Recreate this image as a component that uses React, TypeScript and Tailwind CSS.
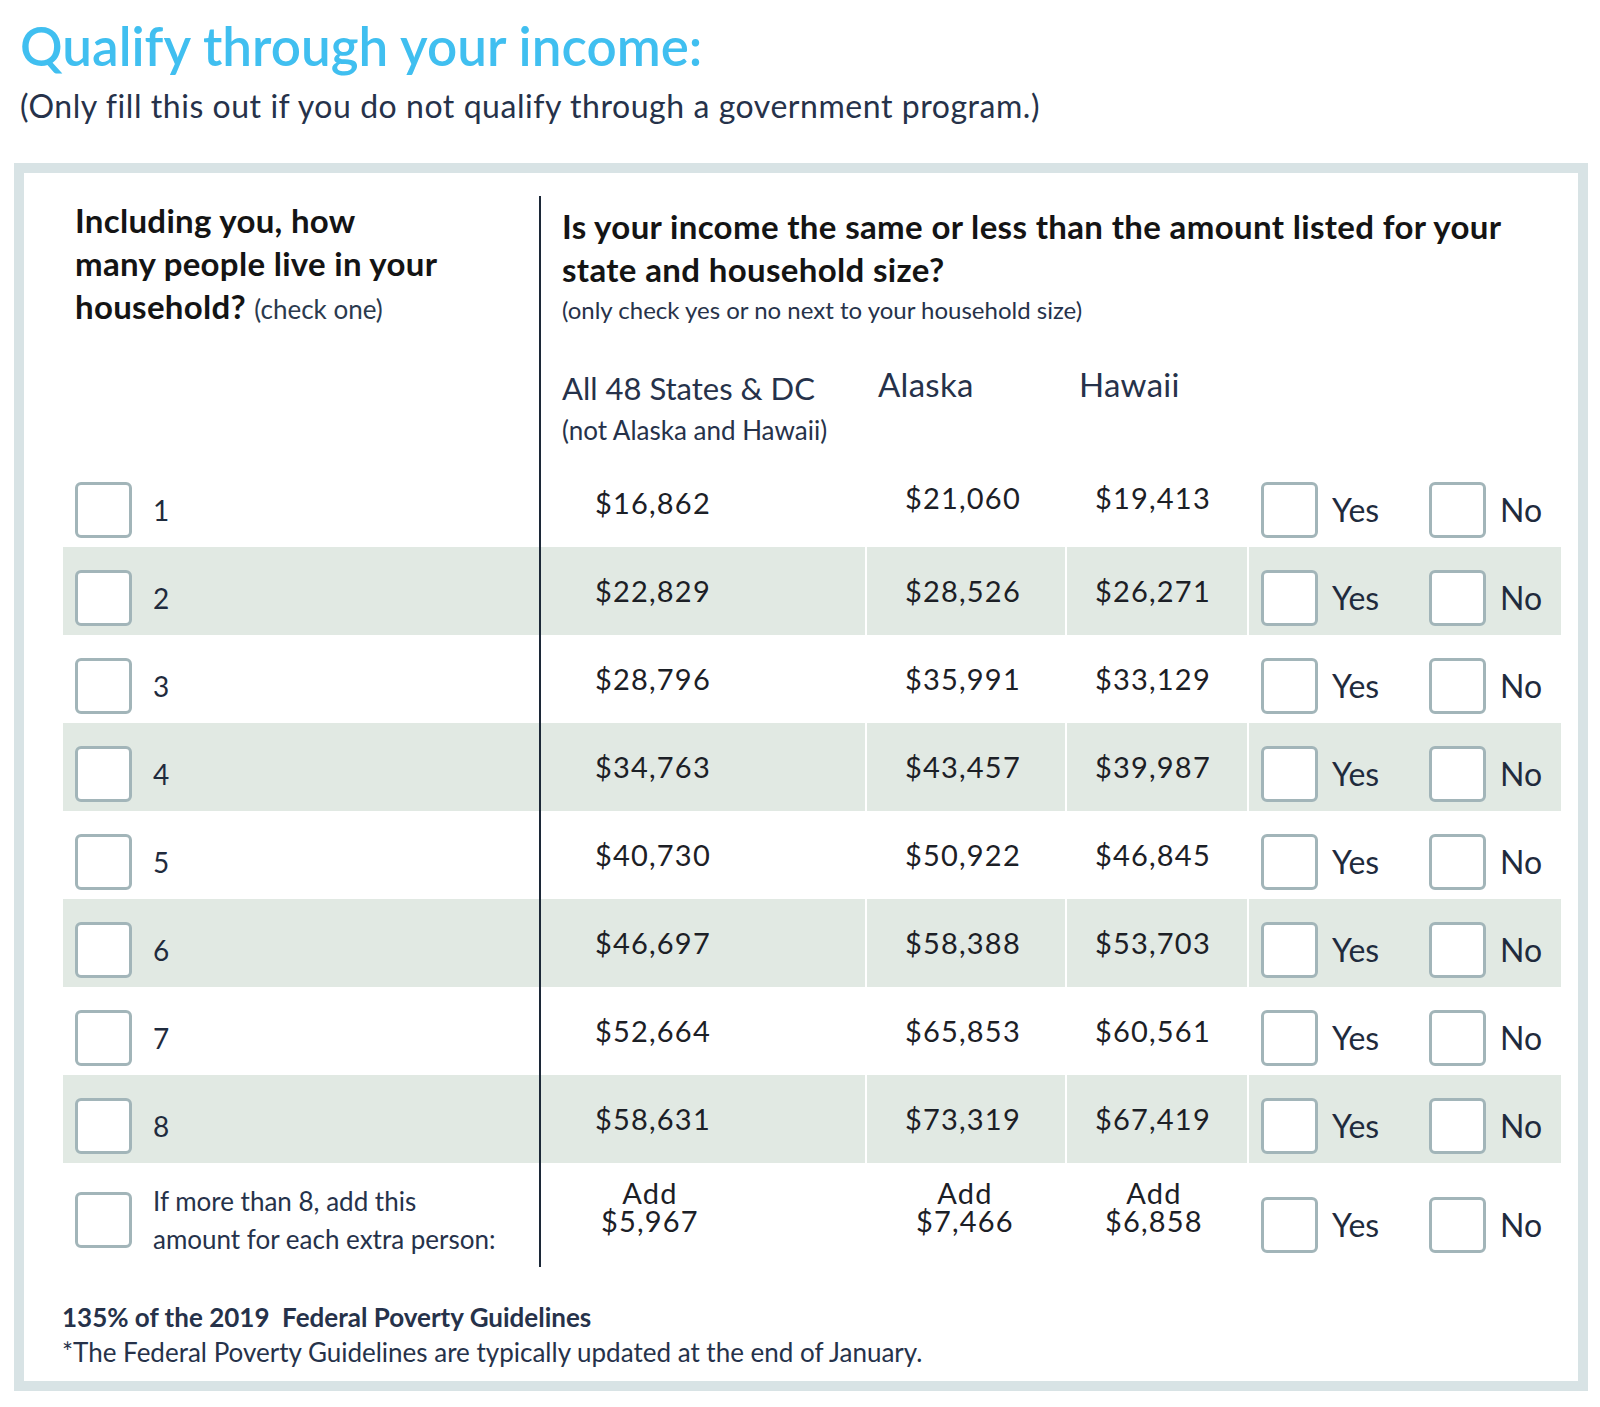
import React from "react"

const rows = [
  { n: "1", all: "$16,862", ak: "$21,060", hi: "$19,413" },
  { n: "2", all: "$22,829", ak: "$28,526", hi: "$26,271" },
  { n: "3", all: "$28,796", ak: "$35,991", hi: "$33,129" },
  { n: "4", all: "$34,763", ak: "$43,457", hi: "$39,987" },
  { n: "5", all: "$40,730", ak: "$50,922", hi: "$46,845" },
  { n: "6", all: "$46,697", ak: "$58,388", hi: "$53,703" },
  { n: "7", all: "$52,664", ak: "$65,853", hi: "$60,561" },
  { n: "8", all: "$58,631", ak: "$73,319", hi: "$67,419" },
]

const sans = "font-['Lato','Noto_Sans',sans-serif]"
const nums = "font-['Lato','Noto_Sans',sans-serif] font-normal text-[#1c2026] text-[29px] tracking-[1.2px]"

function Box() {
  return <div className="h-[56px] w-[57px] shrink-0 rounded-[6px] border-[3px] border-[#a2b5b9] bg-white" />
}

function YesNo() {
  return (
    <div className="flex items-center pl-[12px]">
      <div className="flex w-[168px] items-center gap-[14px]">
        <Box />
        <span className="text-[32px] text-[#1f2b3d]">Yes</span>
      </div>
      <div className="flex items-center gap-[14px]">
        <Box />
        <span className="text-[32px] text-[#1f2b3d]">No</span>
      </div>
    </div>
  )
}

function Add({ v }: { v: string }) {
  return (
    <div className={`${nums} inline-block text-center`}>
      <p className="leading-[28px]">Add</p>
      <p className="leading-[28px]">{v}</p>
    </div>
  )
}

export default function App() {
  return (
    <div className={`min-h-[1407px] w-[1600px] bg-white ${sans}`}>
      <div className="pl-[20px] pt-[14px]">
        <h1 className="text-[53px] leading-[64px] font-semibold text-[#40bff0]">
          Qualify through your income:
        </h1>
        <p className="mt-[8px] text-[32px] leading-[40px] tracking-[0.55px] text-[#26324a]">
          (Only fill this out if you do not qualify through a government program.)
        </p>
      </div>

      <div className="ml-[14px] mr-[12px] mt-[37px] border-[10px] border-[#d8e3e5] bg-white pb-[11px] pl-[39px] pr-[17px] pt-[23px]">
        {/* header */}
        <div className="flex h-[263px]">
          <div className="w-[476px] pl-[12px] pt-[3px]">
            <p className="text-[33px] leading-[43px] font-bold text-[#141414] tracking-[0.3px]">
              Including you, how
              <br />
              many people live in your
              <br />
              household?{" "}
              <span className="text-[26px] font-normal text-[#2b3a4e] tracking-[0px]">(check one)</span>
            </p>
          </div>
          <div className="flex-1 border-l-2 border-[#1c2838] pl-[21px] pt-[9px]">
            <p className="text-[33px] leading-[43px] font-bold text-[#141414] tracking-[0.35px]">
              Is your income the same or less than the amount listed for your
              <br />
              state and household size?
            </p>
            <p className="mt-[4px] text-[24px] leading-[30px] text-[#26324a]">
              (only check yes or no next to your household size)
            </p>
            <div className="mt-[45px] flex items-start text-[#26324a]">
              <div className="w-[305px]">
                <p className="text-[31px] leading-[36px]">All 48 States &amp; DC</p>
                <p className="mt-[9px] text-[26px] leading-[30px]">(not Alaska and Hawaii)</p>
              </div>
              <p className="-mt-[4px] w-[211px] pl-[11px] text-[33px] leading-[36px] tracking-[0.3px]">Alaska</p>
              <p className="-mt-[4px] pl-[1px] text-[33px] leading-[36px] tracking-[0.3px]">Hawaii</p>
            </div>
          </div>
        </div>

        {/* rows */}
        {rows.map((r, i) => {
          const band = i % 2 === 1 ? "bg-[#e1e9e3]" : "bg-white"
          const lift = i === 0 ? "-mt-[10px]" : ""
          return (
            <div key={r.n} className="flex h-[88px]">
              <div className={`flex w-[476px] items-center gap-[21px] pl-[12px] pt-[13px] ${band}`}>
                <Box />
                <span className="text-[28px] text-[#1f2b3d]">{r.n}</span>
              </div>
              <div className="flex gap-[2px] border-l-2 border-[#1c2838]">
                <div className={`flex w-[324px] items-center pl-[54px] ${band}`}>
                  <span className={nums}>{r.all}</span>
                </div>
                <div className={`flex w-[198px] items-center pl-[38px] ${band}`}>
                  <span className={`${nums} ${lift}`}>{r.ak}</span>
                </div>
                <div className={`flex w-[180px] items-center pl-[28px] ${band}`}>
                  <span className={`${nums} ${lift}`}>{r.hi}</span>
                </div>
                <div className={`flex w-[312px] items-center pt-[13px] ${band}`}>
                  <YesNo />
                </div>
              </div>
            </div>
          )
        })}

        {/* extra person row */}
        <div className="flex h-[104px]">
          <div className="flex w-[476px] items-center gap-[21px] pl-[12px] pt-[10px]">
            <Box />
            <div className="text-[26px] leading-[38px] text-[#26324a]">
              <p>If more than 8, add this</p>
              <p>amount for each extra person:</p>
            </div>
          </div>
          <div className="flex gap-[2px] border-l-2 border-[#1c2838]">
            <div className="w-[324px] pl-[60px] pt-[16px]">
              <Add v="$5,967" />
            </div>
            <div className="w-[198px] pl-[49px] pt-[16px]">
              <Add v="$7,466" />
            </div>
            <div className="w-[180px] pl-[38px] pt-[16px]">
              <Add v="$6,858" />
            </div>
            <div className="flex w-[312px] items-center pt-[19px]">
              <YesNo />
            </div>
          </div>
        </div>

        {/* footer */}
        <div className="-ml-[1px] mt-[33px] text-[#26324a]">
          <p className="text-[26px] leading-[35px] font-bold">
            135% of the 2019&nbsp; Federal Poverty Guidelines
          </p>
          <p className="text-[26px] leading-[35px]">
            *The Federal Poverty Guidelines are typically updated at the end of January.
          </p>
        </div>
      </div>
    </div>
  )
}
